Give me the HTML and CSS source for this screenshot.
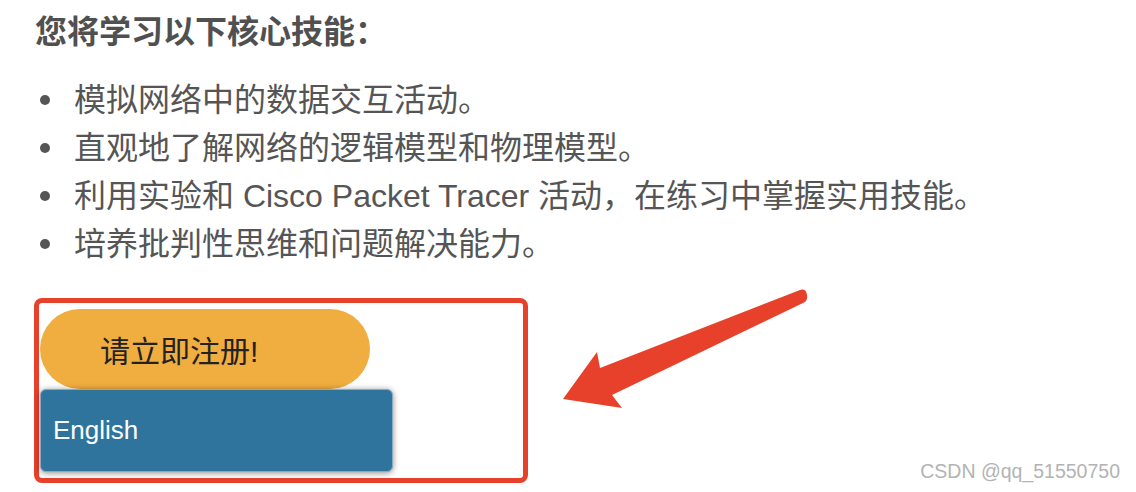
FILE: index.html
```html
<!DOCTYPE html>
<html lang="zh-CN">
<head>
<meta charset="utf-8">
<title>核心技能</title>
<link rel="stylesheet" href="styles.css">
</head>
<body>
<div class="page">
  <h2 class="heading">您将学习以下核心技能：</h2>
  <ul class="skills">
    <li>模拟网络中的数据交互活动。</li>
    <li>直观地了解网络的逻辑模型和物理模型。</li>
    <li>利用实验和 Cisco Packet Tracer 活动，在练习中掌握实用技能。</li>
    <li>培养批判性思维和问题解决能力。</li>
  </ul>
  <div class="highlight">
    <div class="register">请立即注册!</div>
    <div class="lang-menu">English</div>
  </div>
  <svg class="arrow" width="1136" height="492" viewBox="0 0 1136 492">
    <path d="M563 399 L597 352 L600 368 L800 290 Q806 288 807 295 Q808 301 803 303 L612 395 L622 408 Z" fill="#e8412b"/>
  </svg>
  <div class="watermark">CSDN @qq_51550750</div>
</div>
</body>
</html>
```

FILE: styles.css
```css
html, body {
  margin: 0;
  padding: 0;
  background: #ffffff;
}

.page {
  position: relative;
  width: 1136px;
  height: 492px;
  overflow: hidden;
  font-family: "Liberation Sans", "Noto Sans CJK SC", sans-serif;
}

.heading {
  margin: 0;
  padding: 8px 0 0 35px;
  font-size: 32px;
  line-height: 48px;
  font-weight: bold;
  color: #505050;
}

.skills {
  list-style: none;
  margin: 20px 0 0 0;
  padding: 0 0 0 40px;
  font-size: 32px;
  line-height: 48px;
  color: #555555;
}

.skills li {
  display: flex;
  align-items: center;
}

.skills li::before {
  content: "";
  width: 10px;
  height: 10px;
  border-radius: 50%;
  background: #555555;
  margin-right: 24px;
  flex: none;
}

.highlight {
  margin: 30px 0 0 34px;
  width: 483px;
  height: 169px;
  border: 5px solid #e8412b;
  border-radius: 8px;
  padding: 6px 0 0 1px;
  display: flex;
  flex-direction: column;
  align-items: flex-start;
}

.register {
  width: 330px;
  height: 80px;
  border-radius: 40px;
  background: #f0ad40;
  color: #222222;
  font-size: 30px;
  display: flex;
  align-items: center;
  padding-left: 60px;
  box-sizing: border-box;
}

.lang-menu {
  width: 353px;
  height: 83px;
  box-sizing: border-box;
  background: #2e749c;
  border: 1px solid #8aaac0;
  border-radius: 6px;
  box-shadow: 0 1px 6px rgba(0, 0, 0, 0.45);
  color: #ffffff;
  font-size: 26px;
  display: flex;
  align-items: center;
  padding-left: 12px;
}

.arrow {
  position: absolute;
  left: 0;
  top: 0;
  pointer-events: none;
}

.watermark {
  position: absolute;
  right: 16px;
  top: 460px;
  font-size: 19.5px;
  color: #b3b3b3;
}
```
